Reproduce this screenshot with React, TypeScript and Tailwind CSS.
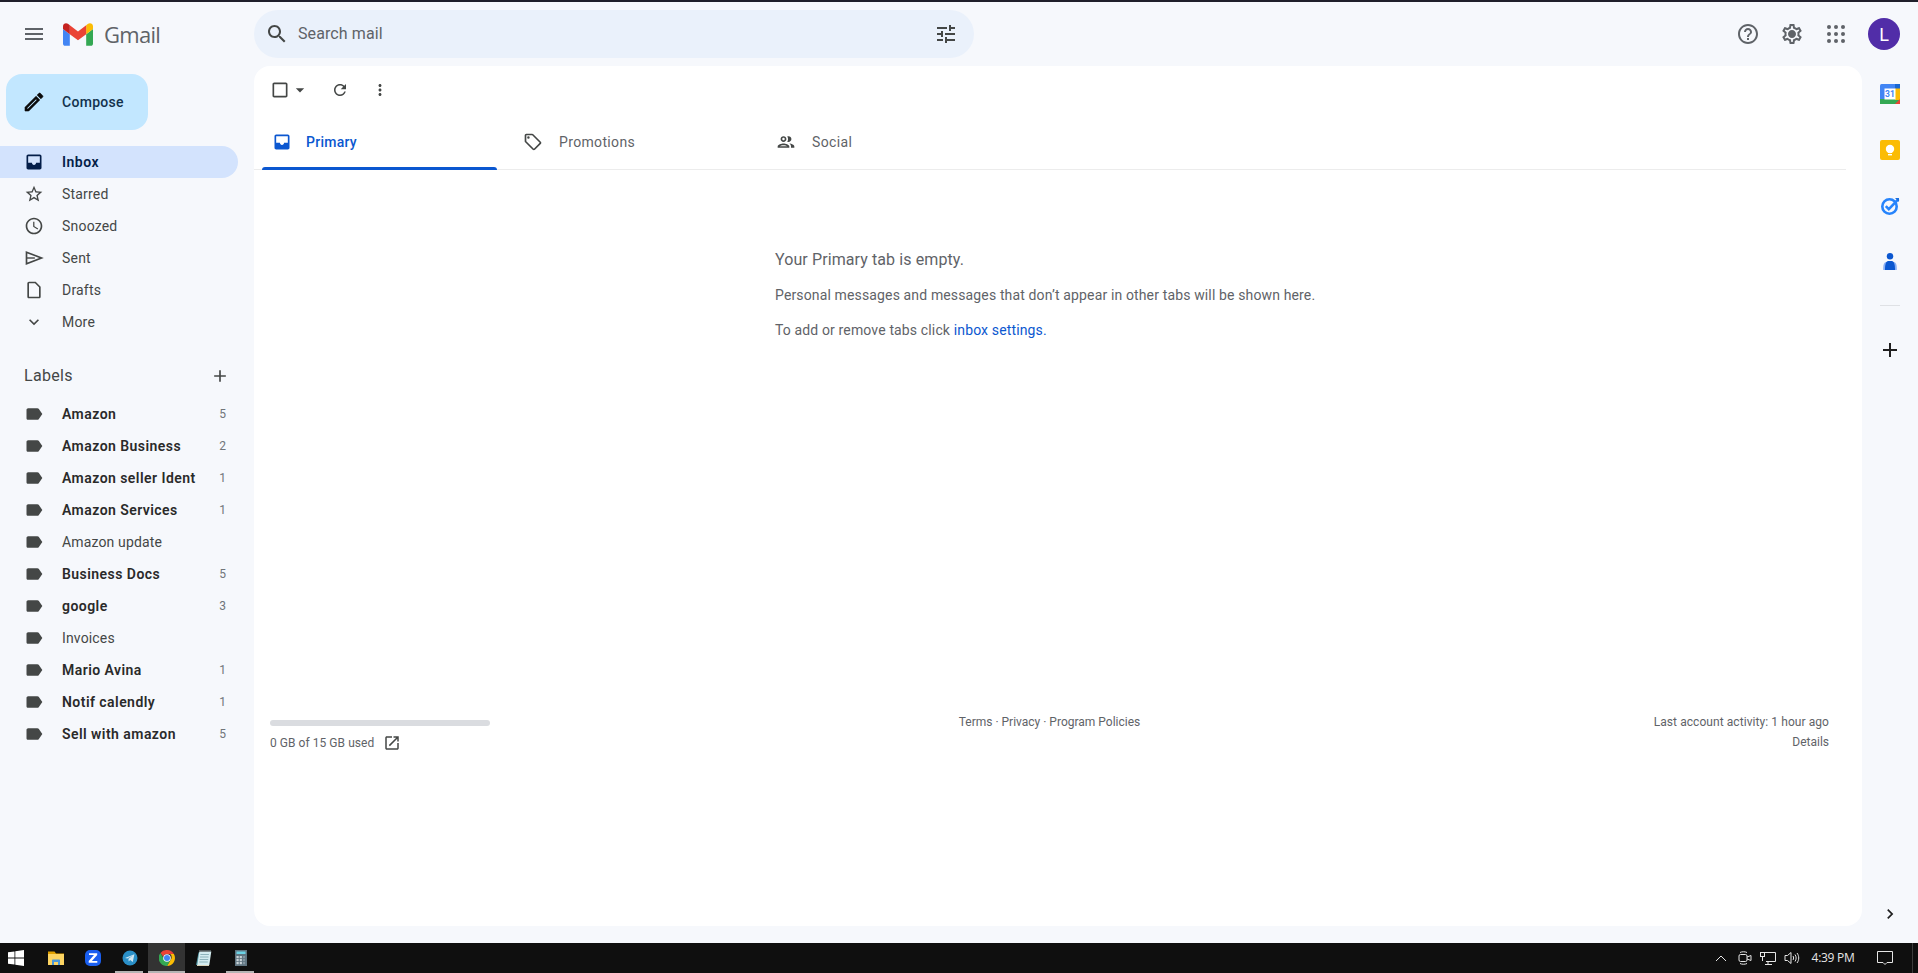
import React from "react";

const P = {
  menu: "M3 18h18v-2H3v2zm0-5h18v-2H3v2zm0-7v2h18V6H3z",
  search: "M15.5 14h-.79l-.28-.27C15.41 12.59 16 11.11 16 9.5 16 5.91 13.09 3 9.5 3S3 5.91 3 9.5 5.91 16 9.5 16c1.61 0 3.09-.59 4.23-1.57l.27.28v.79l5 4.99L20.49 19l-4.99-5zm-6 0C7.01 14 5 11.99 5 9.5S7.01 5 9.5 5 14 7.01 14 9.5 11.99 14 9.5 14z",
  tune: "M3 17v2h6v-2H3zM3 5v2h10V5H3zm10 16v-2h8v-2h-8v-2h-2v6h2zM7 9v2H3v2h4v2h2V9H7zm14 4v-2H11v2h10zm-6-4h2V7h4V5h-4V3h-2v6z",
  help: "M11 18h2v-2h-2v2zm1-16C6.48 2 2 6.48 2 12s4.48 10 10 10 10-4.48 10-10S17.52 2 12 2zm0 18c-4.41 0-8-3.59-8-8s3.59-8 8-8 8 3.59 8 8-3.59 8-8 8zm0-14c-2.21 0-4 1.79-4 4h2c0-1.1.9-2 2-2s2 .9 2 2c0 2-3 1.75-3 5h2c0-2.25 3-2.5 3-5 0-2.21-1.79-4-4-4z",
  settings: "M19.43 12.98c.04-.32.07-.64.07-.98 0-.34-.03-.66-.07-.98l2.11-1.65c.19-.15.24-.42.12-.64l-2-3.46c-.09-.16-.26-.25-.44-.25-.06 0-.12.01-.17.03l-2.49 1c-.52-.4-1.08-.73-1.69-.98l-.38-2.65C14.46 2.18 14.25 2 14 2h-4c-.25 0-.46.18-.49.42l-.38 2.65c-.61.25-1.17.59-1.69.98l-2.49-1c-.06-.02-.12-.03-.18-.03-.17 0-.34.09-.43.25l-2 3.46c-.13.22-.07.49.12.64l2.11 1.65c-.04.32-.07.65-.07.98 0 .33.03.66.07.98l-2.11 1.65c-.19.15-.24.42-.12.64l2 3.46c.09.16.26.25.44.25.06 0 .12-.01.17-.03l2.49-1c.52.4 1.08.73 1.69.98l.38 2.65c.03.24.24.42.49.42h4c.25 0 .46-.18.49-.42l.38-2.65c.61-.25 1.17-.59 1.69-.98l2.49 1c.06.02.12.03.18.03.17 0 .34-.09.43-.25l2-3.46c.12-.22.07-.49-.12-.64l-2.11-1.65zm-1.98-1.71c.04.31.05.52.05.73 0 .21-.02.43-.05.73l-.14 1.13.89.7 1.08.84-.7 1.21-1.27-.51-1.04-.42-.9.68c-.43.32-.84.56-1.25.73l-1.06.43-.16 1.13-.2 1.35h-1.4l-.19-1.35-.16-1.13-1.06-.43c-.43-.18-.83-.41-1.23-.71l-.91-.7-1.06.43-1.27.51-.7-1.21 1.08-.84.89-.7-.14-1.13c-.03-.31-.05-.54-.05-.74s.02-.43.05-.73l.14-1.13-.89-.7-1.08-.84.7-1.21 1.27.51 1.04.42.9-.68c.43-.32.84-.56 1.25-.73l1.06-.43.16-1.13.2-1.35h1.39l.19 1.35.16 1.13 1.06.43c.43.18.83.41 1.23.71l.91.7 1.06-.43 1.27-.51.7 1.21-1.07.85-.89.7.14 1.13zM12 8c-2.21 0-4 1.79-4 4s1.79 4 4 4 4-1.79 4-4-1.79-4-4-4z",
  edit: "M3 17.25V21h3.75L17.81 9.94l-3.75-3.75L3 17.25zM5.92 19H5v-.92l9.06-9.06.92.92L5.92 19zM20.71 5.63l-2.34-2.34c-.2-.2-.45-.29-.71-.29s-.51.1-.7.29l-1.83 1.83 3.75 3.75 1.83-1.83c.39-.39.39-1.02 0-1.41z",
  inbox: "M19 3H5c-1.1 0-2 .9-2 2v14c0 1.1.9 2 2 2h14c1.1 0 2-.9 2-2V5c0-1.1-.9-2-2-2zm0 10h-4.5c0 1.38-1.12 2.5-2.5 2.5S9.5 14.38 9.5 13H5V5h14v8z",
  star: "M22 9.24l-7.19-.62L12 2 9.19 8.63 2 9.24l5.46 4.73L5.82 21 12 17.27 18.18 21l-1.63-7.03L22 9.24zM12 15.4l-3.76 2.27 1-4.28-3.32-2.88 4.38-.38L12 6.1l1.71 4.04 4.38.38-3.32 2.88 1 4.28L12 15.4z",
  clock: "M11.99 2C6.47 2 2 6.48 2 12s4.47 10 9.99 10C17.52 22 22 17.52 22 12S17.52 2 11.99 2zM12 20c-4.42 0-8-3.58-8-8s3.58-8 8-8 8 3.58 8 8-3.58 8-8 8zm.5-13H11v6l5.25 3.15.75-1.23-4.5-2.67z",
  draft: "M6 2c-1.1 0-2 .9-2 2v16c0 1.1.9 2 2 2h12c1.1 0 2-.9 2-2V8l-6-6H6zm0 18V4h7.17L18 8.83V20H6z",
  more: "M16.59 8.59L12 13.17 7.41 8.59 6 10l6 6 6-6z",
  label: "M17.63 5.84C17.27 5.33 16.67 5 16 5L5 5.01C3.9 5.01 3 5.9 3 7v10c0 1.1.9 1.99 2 1.99L16 19c.67 0 1.27-.33 1.63-.84L22 12l-4.37-6.16z",
  add: "M19 13h-6v6h-2v-6H5v-2h6V5h2v6h6v2z",
  refresh: "M17.65 6.35C16.2 4.9 14.21 4 12 4c-4.42 0-7.99 3.58-7.99 8s3.57 8 7.99 8c3.73 0 6.84-2.55 7.73-6h-2.08c-.82 2.33-3.04 4-5.65 4-3.31 0-6-2.69-6-6s2.69-6 6-6c1.66 0 3.14.69 4.22 1.78L13 11h7V4l-2.35 2.35z",
  vert: "M12 8c1.1 0 2-.9 2-2s-.9-2-2-2-2 .9-2 2 .9 2 2 2zm0 2c-1.1 0-2 .9-2 2s.9 2 2 2 2-.9 2-2-.9-2-2-2zm0 6c-1.1 0-2 .9-2 2s.9 2 2 2 2-.9 2-2-.9-2-2-2z",
  tag: "M21.41 11.58l-9-9C12.05 2.22 11.55 2 11 2H4c-1.1 0-2 .9-2 2v7c0 .55.22 1.05.59 1.42l9 9c.36.36.86.58 1.41.58.55 0 1.05-.22 1.41-.59l7-7c.37-.36.59-.86.59-1.41 0-.55-.23-1.06-.59-1.42zM13 20.01L4 11V4h7v-.01l9 9-7 7.02zM6.5 5A1.5 1.5 0 1 0 6.5 8 1.5 1.5 0 1 0 6.5 5z",
  people: "M9 12c1.93 0 3.5-1.57 3.5-3.5S10.93 5 9 5 5.5 6.57 5.5 8.5 7.07 12 9 12zm0-5c.83 0 1.5.67 1.5 1.5S9.83 10 9 10s-1.5-.67-1.5-1.5S8.17 7 9 7zm0 6.75c-2.34 0-7 1.17-7 3.5V19h14v-1.75c0-2.33-4.66-3.5-7-3.5zM4.34 17c.84-.58 2.87-1.25 4.66-1.25s3.82.67 4.66 1.25H4.34zM16.04 13.81c1.16.84 1.96 1.96 1.96 3.44V19h4v-1.75c0-2.02-3.5-3.17-5.96-3.44zM15 12c1.93 0 3.5-1.57 3.5-3.5S16.93 5 15 5c-.54 0-1.04.13-1.5.35.63.89 1 1.98 1 3.15s-.37 2.26-1 3.15c.46.22.96.35 1.5.35z",
  open: "M19 19H5V5h7V3H5c-1.11 0-2 .9-2 2v14c0 1.1.89 2 2 2h14c1.1 0 2-.9 2-2v-7h-2v7zM14 3v2h3.59l-9.83 9.83 1.41 1.41L19 6.41V10h2V3h-7z",
  check: "M19 5v14H5V5h14m0-2H5c-1.1 0-2 .9-2 2v14c0 1.1.9 2 2 2h14c1.1 0 2-.9 2-2V5c0-1.1-.9-2-2-2z",
  right: "M8.59 16.59L13.17 12 8.59 7.41 10 6l6 6-6 6-1.41-1.41z",
  caret: "M7 10l5 5 5-5z",
};

function I({ d, className }: { d: string; className: string }) {
  return (
    <svg viewBox="0 0 24 24" fill="currentColor" className={"shrink-0 " + className}>
      <path fillRule="evenodd" d={d} />
    </svg>
  );
}

function SendIcon() {
  return (
    <svg viewBox="0 0 24 24" fill="none" stroke="currentColor" strokeWidth="2" className="shrink-0 w-5 h-5 text-[#444746]">
      <path d="M3 5l18 7-18 7z" />
      <path d="M3 12h10" strokeWidth="1.7" />
    </svg>
  );
}

const navItems: { name: string; icon: React.ReactNode }[] = [
  { name: "Starred", icon: <I d={P.star} className="w-5 h-5 text-[#444746]" /> },
  { name: "Snoozed", icon: <I d={P.clock} className="w-5 h-5 text-[#444746]" /> },
  { name: "Sent", icon: <SendIcon /> },
  { name: "Drafts", icon: <I d={P.draft} className="w-5 h-5 text-[#444746]" /> },
  { name: "More", icon: <I d={P.more} className="w-5 h-5 text-[#444746]" /> },
];

const labels: [string, string, boolean][] = [
  ["Amazon", "5", true],
  ["Amazon Business", "2", true],
  ["Amazon seller Ident", "1", true],
  ["Amazon Services", "1", true],
  ["Amazon update", "", false],
  ["Business Docs", "5", true],
  ["google", "3", true],
  ["Invoices", "", false],
  ["Mario Avina", "1", true],
  ["Notif calendly", "1", true],
  ["Sell with amazon", "5", true],
];

function GmailLogo() {
  return (
    <svg viewBox="52 42 88 66" className="w-[30px] h-[23px] shrink-0">
      <path fill="#4285f4" d="M58 108h14V74L52 59v43c0 3.32 2.69 6 6 6" />
      <path fill="#34a853" d="M120 108h14c3.32 0 6-2.69 6-6V59l-20 15" />
      <path fill="#fbbc04" d="M120 48v26l20-15v-8c0-7.42-8.47-11.65-14.4-7.2" />
      <path fill="#ea4335" d="M72 74V48l24 18 24-18v26L96 92" />
      <path fill="#c5221f" d="M52 51v8l20 15V48l-5.6-4.2c-5.94-4.45-14.4-.22-14.4 7.2" />
    </svg>
  );
}

function CalendarIcon() {
  return (
    <svg viewBox="0 0 20 20" className="w-5 h-5">
      <rect x="0" y="0" width="20" height="20" rx="1.5" fill="#4285f4" />
      <rect x="0" y="15" width="20" height="5" fill="#34a853" />
      <rect x="15" y="4" width="5" height="12" fill="#fbbc04" />
      <rect x="15" y="0" width="5" height="4.5" fill="#1967d2" />
      <path d="M15 20l5-5v5z" fill="#ea4335" />
      <rect x="4.5" y="4.5" width="11" height="11" fill="#fff" />
      <text x="10" y="13.2" fontSize="8.5" fontWeight="700" textAnchor="middle" fill="#4285f4" fontFamily="Roboto, sans-serif">31</text>
    </svg>
  );
}

function KeepIcon() {
  return (
    <svg viewBox="0 0 20 20" className="w-5 h-5">
      <rect width="20" height="20" rx="2" fill="#fbbc04" />
      <circle cx="10" cy="9" r="4.2" fill="#fff" />
      <rect x="8" y="11" width="4" height="2" fill="#fff" />
      <rect x="8" y="14" width="4" height="1.4" fill="#fff" />
    </svg>
  );
}

function TasksIcon() {
  return (
    <svg viewBox="0 0 20 20" className="w-5 h-5">
      <circle cx="9.5" cy="10.5" r="7.2" fill="none" stroke="#2684fc" strokeWidth="2.6" />
      <path d="M5.8 10.2l3 3L18.5 3.2" fill="none" stroke="#2684fc" strokeWidth="2.6" />
      <path d="M15 2h4v4z" fill="#1a6fe0" />
    </svg>
  );
}

function ContactsIcon() {
  return (
    <svg viewBox="0 0 20 20" className="w-5 h-5">
      <path d="M3.2 18c-.2-4.500.5-7.500 3-8h7.600c2.500.5 3.200 3.500 3 8z" fill="#8ab0f5" />
      <path d="M5 18c-.1-5 .9-8.800 3.200-9h3.600c2.300.2 3.300 4 3.200 9z" fill="#0b57d0" />
      <circle cx="10" cy="4.200" r="3.200" fill="#0b57d0" />
    </svg>
  );
}

function WinLogo() {
  return (
    <svg viewBox="0 0 16 16" className="w-4 h-4">
      <path fill="#fff" d="M0 2.3l6.5-.9v6.2H0zM7.3 1.3L16 0v7.6H7.3zM0 8.4h6.5v6.2L0 13.7zM7.3 8.4H16V16l-8.7-1.2z" />
    </svg>
  );
}

function FolderIcon() {
  return (
    <svg viewBox="0 0 16 16" className="w-4 h-4">
      <path fill="#e0a100" d="M0 1.5h6.5L8 3.5h8v3H0z" />
      <rect x="0" y="4" width="16" height="11" fill="#fcd462" />
      <path fill="#4a97d8" d="M4 15v-4.5c0-.6.4-1 1-1h6c.6 0 1 .4 1 1V15h-2v-3H6v3z" />
    </svg>
  );
}

function ZIcon() {
  return (
    <svg viewBox="0 0 16 16" className="w-4 h-4">
      <rect width="16" height="16" rx="5" fill="#1a5ff0" />
      <path fill="#fff" d="M4 3.2h8.2v1.8L6.9 11h5.4v1.8H3.7v-1.7L9 5H4z" />
    </svg>
  );
}

function TelegramIcon() {
  return (
    <svg viewBox="0 0 16 16" className="w-4 h-4">
      <circle cx="8" cy="8" r="7.5" fill="#2a8fc7" />
      <path fill="#cfe6f2" d="M3 8l9.4-3.8-1.6 7.8-2.7-2-1.4 1.4-.3-2.6 4.5-3.4-5.6 3.1z" />
    </svg>
  );
}

function ChromeIcon() {
  return (
    <svg viewBox="4 4 40 40" className="w-4 h-4">
      <path fill="#ea4335" d="M24 4a20 20 0 0 1 17.3 10H24a10 10 0 0 0-9.5 6.900L7.600 11.400A20 20 0 0 1 24 4z" />
      <path fill="#fbbc04" d="M41.300 14A20 20 0 0 1 24 44l8.700-15a10 10 0 0 0-.7-15z" />
      <path fill="#34a853" d="M24 44A20 20 0 0 1 7.600 11.400l8.700 15A10 10 0 0 0 32.700 29z" />
      <circle cx="24" cy="24" r="9.500" fill="#fff" />
      <circle cx="24" cy="24" r="7.500" fill="#4285f4" />
    </svg>
  );
}

function NotesIcon() {
  return (
    <svg viewBox="0 0 16 16" className="w-4 h-4">
      <path fill="#4b8e9b" d="M0 15l2.500-12.500H5L3 15z" />
      <path fill="#d3ecf0" d="M3.300 1.500h12l-2 13.500h-12z" />
      <path stroke="#d3ecf0" strokeWidth="0.8" strokeDasharray="1 1" d="M3.500 .7h12" />
      <path stroke="#6f9ba3" strokeWidth="0.7" d="M4.400 4.500h8.500M4 7h8.500M3.700 9.500h8.500M3.300 12h8.500" />
      <path stroke="#d8d2b8" strokeWidth="1" d="M1 15.500h12" />
    </svg>
  );
}

function CalcIcon() {
  return (
    <svg viewBox="0 0 16 16" className="w-4 h-4">
      <rect x="2" width="12" height="16" fill="#5f7480" />
      <rect x="3.500" y="1.500" width="9" height="2.500" fill="#6bd3e6" />
      {[0, 1, 2].flatMap((r) =>
        [0, 1, 2].map((c) => (
          <rect key={r + "-" + c} x={3.500 + c * 3.200} y={6 + r * 3} width="2.200" height="2.200" fill={c === 2 ? "#8295a0" : "#c9d3d8"} />
        ))
      )}
    </svg>
  );
}

function TrayCam() {
  return (
    <svg viewBox="0 0 16 16" fill="none" stroke="#e6e6e6" strokeWidth="1" className="w-[16px] h-[16px]">
      <rect x="2" y="4.500" width="8" height="7" rx="1.500" />
      <path d="M10 7l4-1.500v5L10 9" />
      <path d="M3 2.500c2-1 5-1 7 0M3 13.500c2 1 5 1 7 0" />
    </svg>
  );
}

function TrayNet() {
  return (
    <svg viewBox="0 0 16 16" fill="none" stroke="#e6e6e6" strokeWidth="1" className="w-[16px] h-[16px]">
      <path d="M3.500 2.500H15.500V11.500H6" />
      <rect x="0.500" y="2.500" width="4" height="4" />
      <path d="M2.500 6.500V11M8 11.500v3M5 14.500h7" />
    </svg>
  );
}

function TraySpeaker() {
  return (
    <svg viewBox="0 0 16 16" fill="none" stroke="#e6e6e6" strokeWidth="1" className="w-[16px] h-[16px]">
      <path d="M1 5.500h2.500L7 2.500v11l-3.500-3H1z" />
      <path d="M9 6c.8 1.200.8 2.800 0 4M11 4.500c1.500 2 1.500 5 0 7M13 3c2.300 3 2.300 7 0 10" />
    </svg>
  );
}

function TrayNotif() {
  return (
    <svg viewBox="0 0 16 16" fill="none" stroke="#e6e6e6" strokeWidth="1" className="w-[16px] h-[16px]">
      <path d="M.5 1.500h15v11H10L8 14.500 6 12.500H.5z" />
    </svg>
  );
}

function TaskItem({ children, active, open }: { children: React.ReactNode; active?: boolean; open?: boolean }) {
  return (
    <div className={"relative w-[37px] h-[30px] flex items-center justify-center" + (active ? " bg-[#333333]" : "")}>
      {children}
      {open && (
        <div className={"absolute bottom-0 h-[2px] bg-[#b4b4b4] " + (active ? "left-0 right-0" : "left-[4px] right-[5px]")} />
      )}
    </div>
  );
}

export default function App() {
  return (
    <div
      className="w-[1918px] h-[973px] overflow-hidden flex flex-col bg-[#f6f8fc] text-[#444746]"
      style={{ fontFamily: "Roboto, 'Noto Sans', sans-serif" }}
    >
      <div className="h-[2px] shrink-0 bg-[#1f1f2b]" />

      <header className="h-[64px] shrink-0 flex items-center">
        <div className="w-[254px] shrink-0 flex items-center pl-[22px]">
          <I d={P.menu} className="w-6 h-6 text-[#5f6368]" />
          <div className="ml-[17px] flex items-center">
            <GmailLogo />
            <span
              className="ml-[11px] text-[22px] leading-[28px] text-[#5f6368] tracking-[-0.7px]"
              style={{ fontFamily: "'Open Sans', Roboto, sans-serif" }}
            >
              Gmail
            </span>
          </div>
        </div>
        <div className="w-[720px] h-[48px] rounded-full bg-[#eaf1fb] flex items-center pl-[11px] pr-[16px]">
          <I d={P.search} className="w-6 h-6 text-[#444746]" />
          <span className="ml-[9px] text-[16px] tracking-[0.1px] text-[#5f6368] flex-1">Search mail</span>
          <I d={P.tune} className="w-6 h-6 text-[#444746]" />
        </div>
        <div className="ml-auto flex items-center pr-[18px]">
          <I d={P.help} className="w-6 h-6 text-[#5f6368]" />
          <I d={P.settings} className="w-6 h-6 text-[#5f6368] ml-[20px]" />
          <div className="ml-[23px] w-[18px] h-[18px] grid grid-cols-3 gap-[3px]">
            {Array.from({ length: 9 }).map((_, i) => (
              <div key={i} className="w-[4px] h-[4px] rounded-full bg-[#5f6368] m-auto" />
            ))}
          </div>
          <div className="ml-[23px] w-8 h-8 rounded-full bg-[#512da8] text-white text-[18px] flex items-center justify-center">
            L
          </div>
        </div>
      </header>

      <div className="flex-1 min-h-0 flex">
        <aside className="w-[254px] shrink-0 flex flex-col">
          <div className="mt-[8px] ml-[6px] w-[142px] h-[56px] rounded-2xl bg-[#c2e7ff] flex items-center pl-[16px] text-[#12324d]">
            <svg viewBox="0 0 24 24" fill="#0b0b0b" stroke="#0b0b0b" strokeWidth="0.6" className="w-6 h-6 shrink-0">
              <path fillRule="evenodd" d={P.edit} />
            </svg>
            <span className="ml-[16px] text-[14px] font-medium tracking-[0.3px]">Compose</span>
          </div>
          <nav className="mt-[16px] w-[238px]">
            <div className="h-[32px] rounded-r-full bg-[#d3e3fd] flex items-center pl-[24px] text-[#041e49]">
              <I d={P.inbox} className="w-5 h-5 text-[#041e49]" />
              <span className="ml-[18px] text-[14px] font-semibold tracking-[0.5px]">Inbox</span>
            </div>
            {navItems.map((n) => (
              <div key={n.name} className="h-[32px] flex items-center pl-[24px]">
                {n.icon}
                <span className="ml-[18px] text-[14px] tracking-[0.2px]">{n.name}</span>
              </div>
            ))}
          </nav>
          <div className="mt-[18px] mb-[2px] h-[40px] w-[238px] flex items-center justify-between pl-[24px] pr-[8px]">
            <span className="text-[16px] tracking-[0.3px] text-[#444746]">Labels</span>
            <I d={P.add} className="w-5 h-5 text-[#444746]" />
          </div>
          <div className="w-[238px]">
            {labels.map(([n, c, b]) => (
              <div key={n} className="h-[32px] flex items-center pl-[24px] pr-[12px]">
                <I d={P.label} className="w-5 h-5 text-[#444746]" />
                <span className={"ml-[18px] text-[14px] flex-1 " + (b ? "font-semibold tracking-[0.45px] text-[#2a2a2a]" : "tracking-[0.15px]")}>{n}</span>
                <span className="text-[12px] text-[#70757a]">{c}</span>
              </div>
            ))}
          </div>
        </aside>

        <div className="flex-1 min-w-0 flex flex-col">
          <main className="h-[860px] rounded-2xl bg-white flex flex-col pr-[16px]">
            <div className="h-[48px] shrink-0 flex items-center pl-[16px]">
              <I d={P.check} className="w-5 h-5 text-[#444746]" />
              <I d={P.caret} className="w-5 h-5 text-[#444746]" />
              <I d={P.refresh} className="w-[18px] h-[18px] ml-[21px] text-[#444746]" />
              <I d={P.vert} className="w-[18px] h-[18px] ml-[22px] text-[#444746]" />
            </div>
            <div className="h-[56px] shrink-0 flex border-b border-[#ececec] pl-[8px]">
              <div className="w-[253px] relative flex items-center pl-[10px] text-[#0b57d0]">
                <I d={P.inbox} className="w-5 h-5" />
                <span className="ml-[14px] pt-[2px] text-[14px] font-medium tracking-[0.25px]">Primary</span>
                <div className="absolute left-0 bottom-[-1px] w-[235px] h-[3px] rounded-t-[3px] bg-[#0b57d0]" />
              </div>
              <div className="w-[253px] flex items-center pl-[8px]">
                <I d={P.tag} className="w-5 h-5 text-[#444746]" />
                <span className="ml-[16px] pt-[2px] text-[14px] tracking-[0.35px] text-[#5f6368]">Promotions</span>
              </div>
              <div className="flex items-center pl-[8px]">
                <I d={P.people} className="w-5 h-5 text-[#444746]" />
                <span className="ml-[16px] pt-[2px] text-[14px] tracking-[0.35px] text-[#5f6368]">Social</span>
              </div>
            </div>

            <div className="pt-[80px] pl-[521px] text-[#5f6368]">
              <div className="text-[16px] leading-[20px] tracking-[0.1px]">Your Primary tab is empty.</div>
              <div className="mt-[15px] text-[14px] leading-[20px] tracking-[0.14px]">
                Personal messages and messages that don&rsquo;t appear in other tabs will be shown here.
              </div>
              <div className="mt-[15px] text-[14px] leading-[20px] tracking-[0.14px]">
                To add or remove tabs click <span className="text-[#0b57d0]">inbox settings.</span>
              </div>
            </div>

            <div className="mt-[372px] pl-[16px] pr-[17px] grid grid-cols-3 text-[12px] leading-[20px] text-[#5f6368]">
              <div className="pt-[8px]">
                <div className="w-[220px] h-[6px] rounded-full bg-[#dadce0]" />
                <div className="mt-[7px] flex items-center">
                  <span className="tracking-[0.05px]">0 GB of 15 GB used</span>
                  <I d={P.open} className="w-[18px] h-[18px] ml-[9px] text-[#444746]" />
                </div>
              </div>
              <div className="text-center">Terms · Privacy · Program Policies</div>
              <div className="text-right">
                <div className="tracking-[0.07px]">Last account activity: 1 hour ago</div>
                <div>Details</div>
              </div>
            </div>
          </main>
        </div>

        <aside className="w-[56px] shrink-0 flex flex-col items-center">
          <div className="mt-[18px]"><CalendarIcon /></div>
          <div className="mt-[36px]"><KeepIcon /></div>
          <div className="mt-[36px]"><TasksIcon /></div>
          <div className="mt-[36px]"><ContactsIcon /></div>
          <div className="mt-[33px] w-[20px] h-[1px] bg-[#dfe1e5]" />
          <I d={P.add} className="w-6 h-6 mt-[32px] text-[#1f1f1f]" />
          <I d={P.right} className="w-5 h-5 mt-[542px] text-[#1f1f1f]" />
        </aside>
      </div>

      <div className="h-[17px] shrink-0" />

      <footer className="h-[30px] shrink-0 bg-[#0f0f0f] flex items-center text-[#e6e6e6]">
        <div className="w-[32px] flex justify-center"><WinLogo /></div>
        <div className="flex ml-[5px]">
          <TaskItem><FolderIcon /></TaskItem>
          <TaskItem><ZIcon /></TaskItem>
          <TaskItem open><TelegramIcon /></TaskItem>
          <div className="w-[0px]" />
          <TaskItem active open><ChromeIcon /></TaskItem>
          <TaskItem><NotesIcon /></TaskItem>
          <TaskItem open><CalcIcon /></TaskItem>
        </div>
        <div className="ml-auto flex items-center pr-[5px]">
          <svg viewBox="0 0 12 12" fill="none" stroke="#e6e6e6" strokeWidth="1" className="w-3 h-3"><path d="M1 9l5-5 5 5" /></svg>
          <div className="ml-[10px]"><TrayCam /></div>
          <div className="ml-[7px]"><TrayNet /></div>
          <div className="ml-[8px]"><TraySpeaker /></div>
          <span className="ml-[11px] text-[12px] w-[44px] text-center whitespace-nowrap tracking-[-0.3px]" style={{ fontFamily: "'Open Sans', sans-serif" }}>4:39 PM</span>
          <div className="ml-[22px]"><TrayNotif /></div>
          <div className="ml-[19px] w-px h-[30px] bg-[#3c3c3c]" />
        </div>
      </footer>
    </div>
  );
}
